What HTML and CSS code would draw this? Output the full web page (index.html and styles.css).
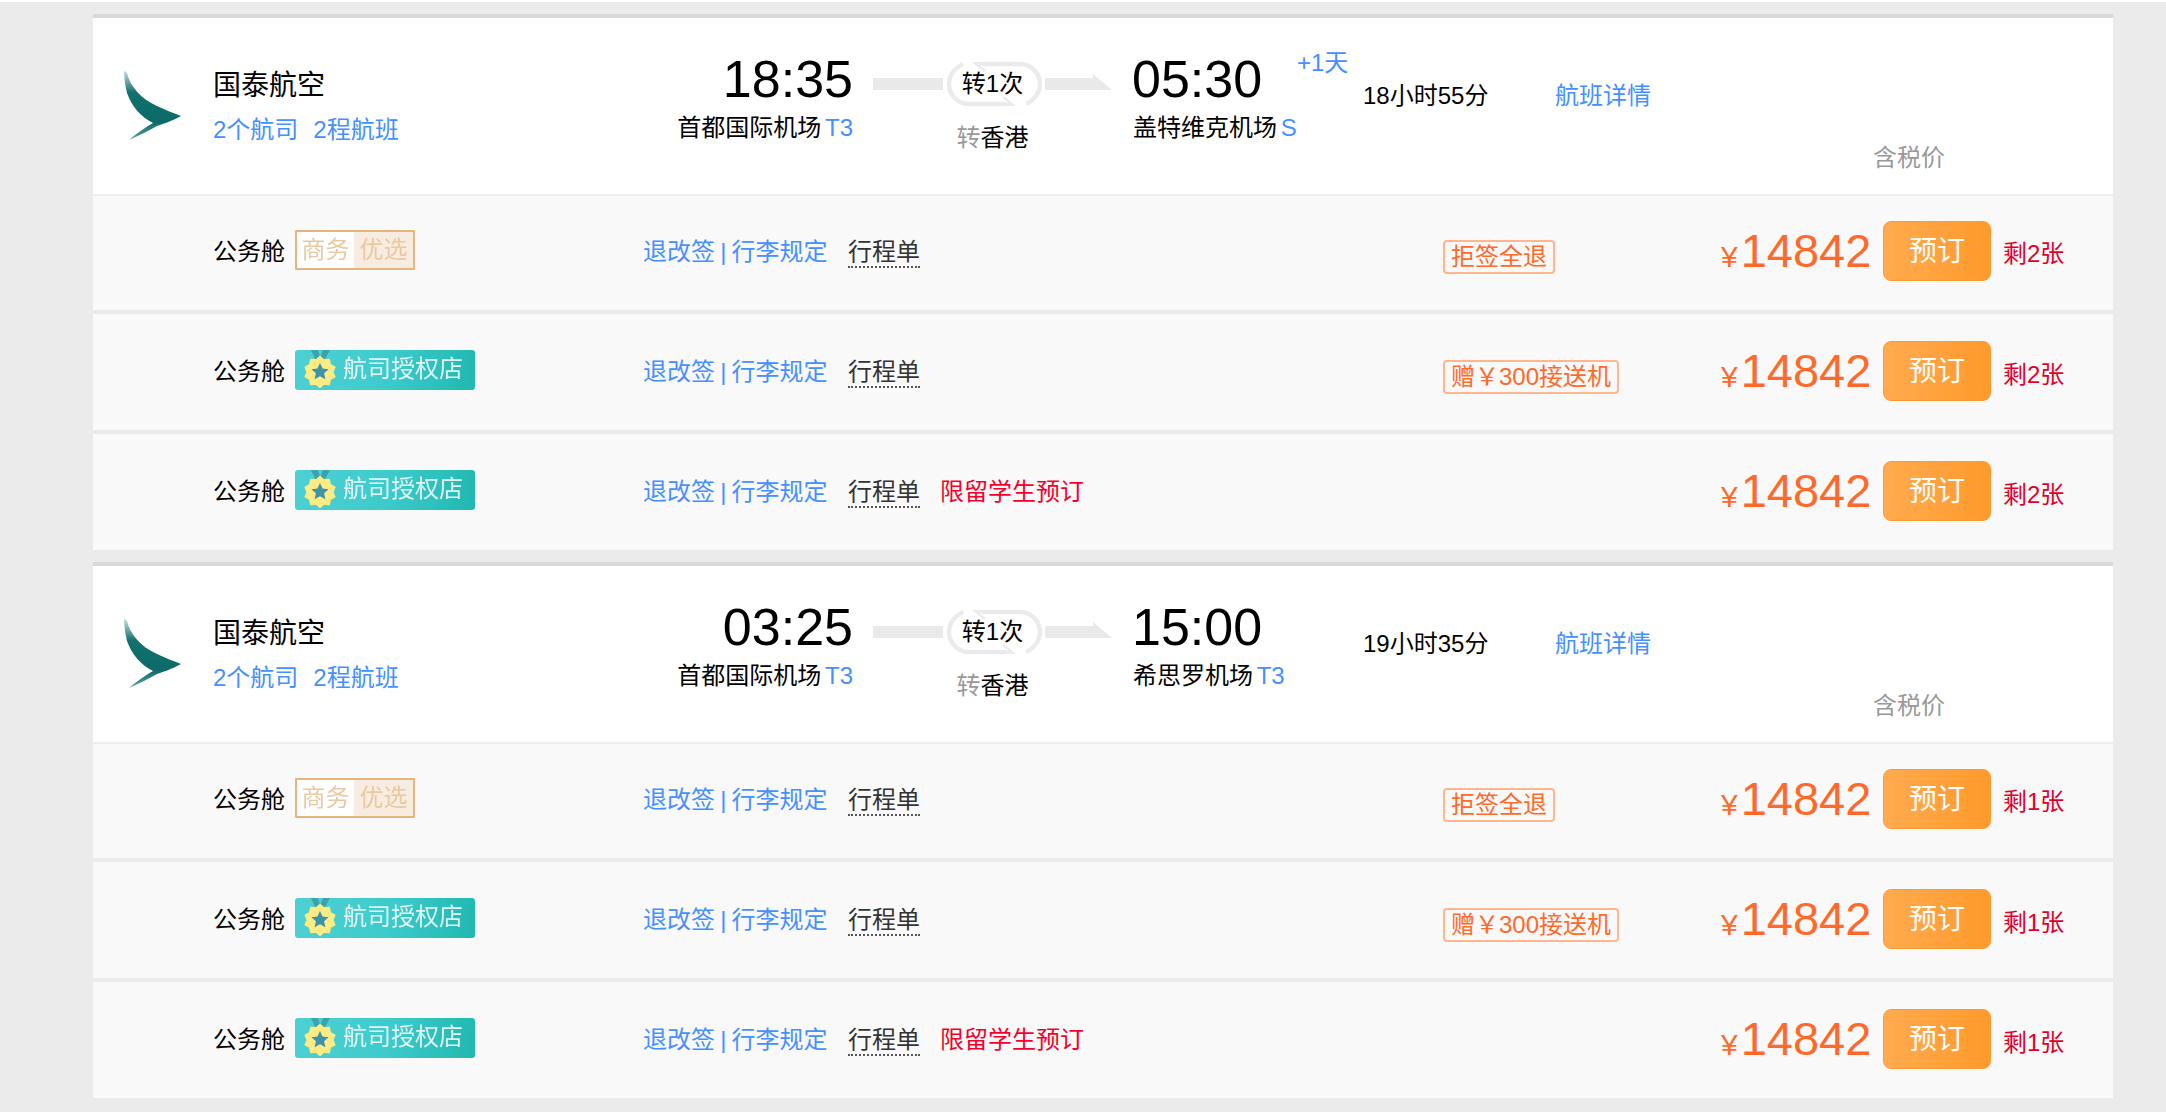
FILE: index.html
```html
<!DOCTYPE html>
<html lang="zh-CN">
<head>
<meta charset="utf-8">
<title>航班列表</title>
<link rel="stylesheet" href="styles.css">
</head>
<body>
<div class="topline"></div>
<main class="list">
  <section class="group">
    <header class="head">
      <div class="logo"><svg width="60" height="72" viewBox="122 69 60 72"><defs><linearGradient id="lg1" x1="0" y1="0" x2="0" y2="1"><stop offset="0" stop-color="#cfe5e4"/><stop offset=".32" stop-color="#12706e"/><stop offset=".75" stop-color="#0e6b69"/><stop offset="1" stop-color="#5ba3a0"/></linearGradient><filter id="bl1"><feGaussianBlur stdDeviation=".6"/></filter></defs><path filter="url(#bl1)" fill="url(#lg1)" d="M124 70 C125 72 127 72 127 73 C130 86 141 99 157 106 C165 110 174 113 181 116 C172 121 163 124 157 126 C148 131 138 136 129 140 C136 134 144 128 153 123 C141 117 132 107 127 93 C125 85 124 77 124 70Z"/></svg></div>
      <div class="airline"><div class="airline-name">国泰航空</div><div class="airline-sub"><span>2个航司</span><span>2程航班</span></div></div>
      <div class="depart"><div class="time">18:35</div><div class="port">首都国际机场 <span class="blue">T3</span></div></div>
      <div class="route">
        <svg class="route-art" width="240" height="50" viewBox="873 60 240 50"><path fill="#e9e9e9" d="M873 78H943V90H873ZM1045 78H1093V74L1112 90H1045Z"/><path fill="none" stroke="#ebebeb" stroke-width="4.500" d="M982 64H1020C1031 64 1040 73 1040 84C1040 95 1031 102 1026 104M1006 104H969C958 104 949 95 949 84C949 73 958 66 963 64"/><path fill="#ebebeb" d="M972 62H986L980 66 986 70 984 72ZM1016 106H1002L1008 102 1002 98 1004 96Z"/></svg>
        <div class="stops">转1次</div>
        <div class="via"><span class="grey">转</span>香港</div>
      </div>
      <div class="arrive"><div class="time">05:30</div><div class="port">盖特维克机场 <span class="blue">S</span></div><div class="plus">+1天</div></div>
      <div class="duration">18小时55分</div>
      <div class="detail">航班详情</div>
      <div class="tax">含税价</div>
    </header>
    <div class="row">
      <div class="cabin">公务舱</div>
      <div class="badge-cell"><div class="biz"><span class="biz-a">商务</span><span class="biz-b">优选</span></div></div>
      <div class="rules">退改签 | 行李规定</div><div class="itin"><span>行程单</span></div><div class="note"></div>
      <div class="tag-cell"><span class="tag">拒签全退</span></div>
      <div class="price"><span class="yen">¥</span>14842</div><div class="book">预订</div><div class="left">剩2张</div>
    </div>
    <div class="row">
      <div class="cabin">公务舱</div>
      <div class="badge-cell"><div class="auth"><svg class="medal" width="32" height="40" viewBox="0 0 32 40"><path fill="#3ba3ad" d="M7 0H14L17 11H12ZM26 0H19L15 11H20Z"/><path fill="#fdec84" stroke="#fdec84" stroke-linejoin="round" d="M16 6L20 9.600 25.400 9.100 26.500 14.400 31.200 17.100 29 22 31.200 26.900 26.500 29.600 25.400 34.900 20 34.400 16 38 12 34.400 6.600 34.900 5.500 29.600 .8 26.900 3 22 .8 17.100 5.500 14.400 6.600 9.100 12 9.600Z"/><path fill="#3f93a8" d="M16 13L18.600 18.600 24.600 19.200 20.100 23.300 21.400 29.300 16 26.300 10.600 29.300 11.900 23.300 7.400 19.200 13.400 18.600Z"/></svg><span class="auth-text">航司授权店</span></div></div>
      <div class="rules">退改签 | 行李规定</div><div class="itin"><span>行程单</span></div><div class="note"></div>
      <div class="tag-cell"><span class="tag">赠￥300接送机</span></div>
      <div class="price"><span class="yen">¥</span>14842</div><div class="book">预订</div><div class="left">剩2张</div>
    </div>
    <div class="row">
      <div class="cabin">公务舱</div>
      <div class="badge-cell"><div class="auth"><svg class="medal" width="32" height="40" viewBox="0 0 32 40"><path fill="#3ba3ad" d="M7 0H14L17 11H12ZM26 0H19L15 11H20Z"/><path fill="#fdec84" stroke="#fdec84" stroke-linejoin="round" d="M16 6L20 9.600 25.400 9.100 26.500 14.400 31.200 17.100 29 22 31.200 26.900 26.500 29.600 25.400 34.900 20 34.400 16 38 12 34.400 6.600 34.900 5.500 29.600 .8 26.900 3 22 .8 17.100 5.500 14.400 6.600 9.100 12 9.600Z"/><path fill="#3f93a8" d="M16 13L18.600 18.600 24.600 19.200 20.100 23.300 21.400 29.300 16 26.300 10.600 29.300 11.900 23.300 7.400 19.200 13.400 18.600Z"/></svg><span class="auth-text">航司授权店</span></div></div>
      <div class="rules">退改签 | 行李规定</div><div class="itin"><span>行程单</span></div><div class="note">限留学生预订</div>
      <div class="tag-cell"></div>
      <div class="price"><span class="yen">¥</span>14842</div><div class="book">预订</div><div class="left">剩2张</div>
    </div>
  </section>
  <section class="group">
    <header class="head">
      <div class="logo"><svg width="60" height="72" viewBox="122 69 60 72"><defs><linearGradient id="lg2" x1="0" y1="0" x2="0" y2="1"><stop offset="0" stop-color="#cfe5e4"/><stop offset=".32" stop-color="#12706e"/><stop offset=".75" stop-color="#0e6b69"/><stop offset="1" stop-color="#5ba3a0"/></linearGradient><filter id="bl2"><feGaussianBlur stdDeviation=".6"/></filter></defs><path filter="url(#bl2)" fill="url(#lg2)" d="M124 70 C125 72 127 72 127 73 C130 86 141 99 157 106 C165 110 174 113 181 116 C172 121 163 124 157 126 C148 131 138 136 129 140 C136 134 144 128 153 123 C141 117 132 107 127 93 C125 85 124 77 124 70Z"/></svg></div>
      <div class="airline"><div class="airline-name">国泰航空</div><div class="airline-sub"><span>2个航司</span><span>2程航班</span></div></div>
      <div class="depart"><div class="time">03:25</div><div class="port">首都国际机场 <span class="blue">T3</span></div></div>
      <div class="route">
        <svg class="route-art" width="240" height="50" viewBox="873 60 240 50"><path fill="#e9e9e9" d="M873 78H943V90H873ZM1045 78H1093V74L1112 90H1045Z"/><path fill="none" stroke="#ebebeb" stroke-width="4.500" d="M982 64H1020C1031 64 1040 73 1040 84C1040 95 1031 102 1026 104M1006 104H969C958 104 949 95 949 84C949 73 958 66 963 64"/><path fill="#ebebeb" d="M972 62H986L980 66 986 70 984 72ZM1016 106H1002L1008 102 1002 98 1004 96Z"/></svg>
        <div class="stops">转1次</div>
        <div class="via"><span class="grey">转</span>香港</div>
      </div>
      <div class="arrive"><div class="time">15:00</div><div class="port">希思罗机场 <span class="blue">T3</span></div></div>
      <div class="duration">19小时35分</div>
      <div class="detail">航班详情</div>
      <div class="tax">含税价</div>
    </header>
    <div class="row">
      <div class="cabin">公务舱</div>
      <div class="badge-cell"><div class="biz"><span class="biz-a">商务</span><span class="biz-b">优选</span></div></div>
      <div class="rules">退改签 | 行李规定</div><div class="itin"><span>行程单</span></div><div class="note"></div>
      <div class="tag-cell"><span class="tag">拒签全退</span></div>
      <div class="price"><span class="yen">¥</span>14842</div><div class="book">预订</div><div class="left">剩1张</div>
    </div>
    <div class="row">
      <div class="cabin">公务舱</div>
      <div class="badge-cell"><div class="auth"><svg class="medal" width="32" height="40" viewBox="0 0 32 40"><path fill="#3ba3ad" d="M7 0H14L17 11H12ZM26 0H19L15 11H20Z"/><path fill="#fdec84" stroke="#fdec84" stroke-linejoin="round" d="M16 6L20 9.600 25.400 9.100 26.500 14.400 31.200 17.100 29 22 31.200 26.900 26.500 29.600 25.400 34.900 20 34.400 16 38 12 34.400 6.600 34.900 5.500 29.600 .8 26.900 3 22 .8 17.100 5.500 14.400 6.600 9.100 12 9.600Z"/><path fill="#3f93a8" d="M16 13L18.600 18.600 24.600 19.200 20.100 23.300 21.400 29.300 16 26.300 10.600 29.300 11.900 23.300 7.400 19.200 13.400 18.600Z"/></svg><span class="auth-text">航司授权店</span></div></div>
      <div class="rules">退改签 | 行李规定</div><div class="itin"><span>行程单</span></div><div class="note"></div>
      <div class="tag-cell"><span class="tag">赠￥300接送机</span></div>
      <div class="price"><span class="yen">¥</span>14842</div><div class="book">预订</div><div class="left">剩1张</div>
    </div>
    <div class="row">
      <div class="cabin">公务舱</div>
      <div class="badge-cell"><div class="auth"><svg class="medal" width="32" height="40" viewBox="0 0 32 40"><path fill="#3ba3ad" d="M7 0H14L17 11H12ZM26 0H19L15 11H20Z"/><path fill="#fdec84" stroke="#fdec84" stroke-linejoin="round" d="M16 6L20 9.600 25.400 9.100 26.500 14.400 31.200 17.100 29 22 31.200 26.900 26.500 29.600 25.400 34.900 20 34.400 16 38 12 34.400 6.600 34.900 5.500 29.600 .8 26.900 3 22 .8 17.100 5.500 14.400 6.600 9.100 12 9.600Z"/><path fill="#3f93a8" d="M16 13L18.600 18.600 24.600 19.200 20.100 23.300 21.400 29.300 16 26.300 10.600 29.300 11.900 23.300 7.400 19.200 13.400 18.600Z"/></svg><span class="auth-text">航司授权店</span></div></div>
      <div class="rules">退改签 | 行李规定</div><div class="itin"><span>行程单</span></div><div class="note">限留学生预订</div>
      <div class="tag-cell"></div>
      <div class="price"><span class="yen">¥</span>14842</div><div class="book">预订</div><div class="left">剩1张</div>
    </div>
  </section>
</main>
</body>
</html>
```
FILE: styles.css
```css
* { box-sizing: border-box; }
html, body { margin: 0; height: 1112px; overflow: hidden; }
body {
  background: #ebebeb;
  color: #000;
  font-family: "Liberation Sans", "Noto Sans CJK SC", sans-serif;
  font-size: 24px;
  line-height: 32px;
}
.topline { height: 2px; background: #fff; }
.list { margin: 12px 53px 0 93px; }
.group { border-top: 4px solid #d9d9d9; margin-bottom: 12px; }

.head { display: flex; align-items: flex-start; height: 176px; background: #fff; position: relative; }
.logo { width: 120px; padding: 51px 0 0 29px; }
.logo svg { display: block; }
.airline { width: 447px; padding-top: 52px; }
.airline-name { font-size: 28px; line-height: 32px; }
.airline-sub { display: flex; gap: 15px; margin-top: 12px; color: #4590ff; }
.blue { color: #4590ff; }
.grey { color: #999; }
.depart { width: 193px; text-align: right; padding-top: 31px; white-space: nowrap; }
.arrive { width: 231px; padding-top: 31px; position: relative; white-space: nowrap; }
.time { font-size: 52px; line-height: 60px; }
.port { margin-top: 3px; word-spacing: -3px; }
.arrive .port { padding-left: 1px; }
.plus { position: absolute; left: 165px; top: 29px; color: #4590ff; }
.route { width: 279px; padding-top: 50px; text-align: center; position: relative; }
.route-art { position: absolute; left: 20px; top: 42px; display: block; }
.stops { position: relative; }
.via { position: relative; margin-top: 22px; }
.duration { width: 192px; padding-top: 62px; }
.detail { width: 318px; padding-top: 62px; color: #4590ff; }
.tax { padding-top: 124px; color: #999; }

.row {
  display: flex;
  align-items: flex-start;
  height: 116px;
  margin-bottom: 4px;
  padding-left: 120px;
  background: #f9f9f9;
}
.head + .row { border-top: 2px solid #efefef; }
.row:last-child { margin-bottom: 0; }
.cabin { width: 82px; margin-top: 42px; }
.head + .row .cabin { margin-top: 40px; }
.badge-cell { width: 348px; margin-top: 36px; }
.head + .row .badge-cell { margin-top: 34px; }
.biz { display: flex; width: 120px; height: 40px; border: 2px solid #e5b57f; border-radius: 1px; line-height: 36px; color: #e9c9a2; }
.biz span { filter: blur(.4px); }
.biz-a { width: 57px; background: #fff; text-align: center; }
.biz-b { width: 59px; background: #f7ecdf; text-align: center; }
.auth {
  display: flex;
  align-items: flex-start;
  width: 180px;
  height: 40px;
  padding-left: 9px;
  border-radius: 3px;
  background: linear-gradient(100deg, #4dd0d3, #3ecbcc 50%, #20b8b0);
  color: #fff;
}
.medal { display: block; flex: none; }
.auth-text { margin-left: 7px; line-height: 38px; opacity: .85; filter: blur(.4px); }
.rules { width: 205px; margin-top: 42px; color: #4590ff; white-space: nowrap; word-spacing: -1.500px; }
.head + .row .rules, .head + .row .itin, .head + .row .note { margin-top: 40px; }
.itin { width: 92px; margin-top: 42px; color: #333; }
.itin span { display: block; width: 72px; height: 32px; border-bottom: 2px dotted #555; }
.note { width: 503px; margin-top: 42px; color: #f5002a; }
.tag-cell { width: 278px; margin-top: 46px; }
.head + .row .tag-cell { margin-top: 44px; }
.tag {
  display: inline-block;
  height: 34px;
  padding: 0 6px;
  border: 2px solid #ffb68e;
  border-radius: 4px;
  color: #ff6a2b;
  line-height: 30px;
  white-space: nowrap;
  vertical-align: top;
}
.price { width: 162px; margin-top: 29px; color: #ff6a2b; font-size: 47px; line-height: 56px; white-space: nowrap; }
.head + .row .price { margin-top: 27px; }
.yen { font-size: 30px; margin-right: 3px; }
.book {
  width: 108px;
  height: 60px;
  margin-top: 27px;
  border: 1px solid #ff9a2e;
  border-radius: 8px;
  background: linear-gradient(90deg, #ffab50, #ff9a2b);
  color: #fff;
  font-size: 28px;
  line-height: 60px;
  text-align: center;
}
.head + .row .book { margin-top: 25px; }
.left { margin: 45px 0 0 12px; color: #e0002a; white-space: nowrap; }
.head + .row .left { margin-top: 42px; }
```
